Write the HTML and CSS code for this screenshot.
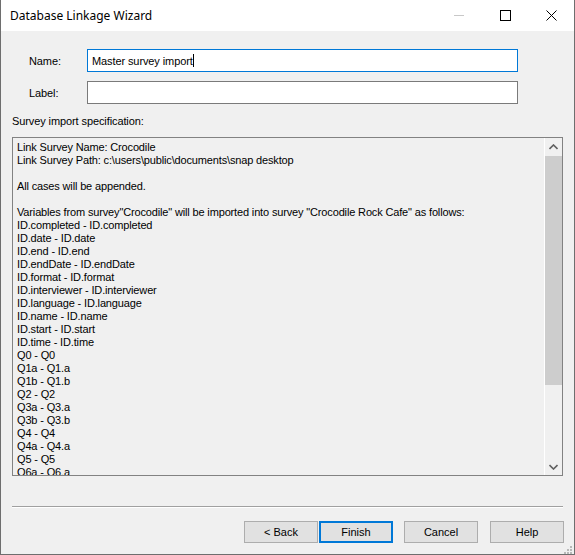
FILE: index.html
```html
<!DOCTYPE html>
<html lang="en">
<head>
    <meta charset="UTF-8">
    <title>Database Linkage Wizard</title>
    <link rel="stylesheet" href="styles.css">
</head>
<body>
    <div class="window">
        <div class="titlebar">
            <span class="title">Database Linkage Wizard</span>
            <div class="controls">
                <span class="ctl min"><svg width="11" height="11"><line x1="0" y1="5.5" x2="10" y2="5.5" stroke="#c8c8c8" stroke-width="1"/></svg></span>
                <span class="ctl max"><svg width="11" height="11"><rect x="0.5" y="0.5" width="10" height="10" fill="none" stroke="#000" stroke-width="1"/></svg></span>
                <span class="ctl close"><svg width="11" height="11"><path d="M0.5 0.5 L10.5 10.5 M10.5 0.5 L0.5 10.5" stroke="#000" stroke-width="1"/></svg></span>
            </div>
        </div>

        <div class="content">
            <div class="field">
                <label>Name:</label>
                <div class="input focus">Master survey import<span class="caret"></span></div>
            </div>
            <div class="field">
                <label>Label:</label>
                <div class="input"></div>
            </div>

            <div class="spec-label">Survey import specification:</div>
            <div class="spec">
                <div class="spec-text">
                    <div>Link Survey Name: Crocodile</div>
                    <div>Link Survey Path: c:\users\public\documents\snap desktop</div>
                    <div>&nbsp;</div>
                    <div>All cases will be appended.</div>
                    <div>&nbsp;</div>
                    <div>Variables from survey"Crocodile" will be imported into survey "Crocodile Rock Cafe" as follows:</div>
                    <div>ID.completed - ID.completed</div>
                    <div>ID.date - ID.date</div>
                    <div>ID.end - ID.end</div>
                    <div>ID.endDate - ID.endDate</div>
                    <div>ID.format - ID.format</div>
                    <div>ID.interviewer - ID.interviewer</div>
                    <div>ID.language - ID.language</div>
                    <div>ID.name - ID.name</div>
                    <div>ID.start - ID.start</div>
                    <div>ID.time - ID.time</div>
                    <div>Q0 - Q0</div>
                    <div>Q1a - Q1.a</div>
                    <div>Q1b - Q1.b</div>
                    <div>Q2 - Q2</div>
                    <div>Q3a - Q3.a</div>
                    <div>Q3b - Q3.b</div>
                    <div>Q4 - Q4</div>
                    <div>Q4a - Q4.a</div>
                    <div>Q5 - Q5</div>
                    <div>Q6a - Q6.a</div>
                </div>
                <div class="scrollbar">
                    <div class="arrow"><svg width="9" height="6"><path d="M0.5 5 L4.5 1 L8.5 5" fill="none" stroke="#606060" stroke-width="1.6"/></svg></div>
                    <div class="track"><div class="thumb"></div></div>
                    <div class="arrow"><svg width="9" height="6"><path d="M0.5 1 L4.5 5 L8.5 1" fill="none" stroke="#606060" stroke-width="1.6"/></svg></div>
                </div>
            </div>

            <div class="separator"></div>

            <div class="buttons">
                <button>&lt; Back</button>
                <button class="default">Finish</button>
                <button class="cancel">Cancel</button>
                <button class="help">Help</button>
            </div>
        </div>
        <div class="grip">
            <svg width="8" height="8">
                <rect x="6" y="0" width="2" height="2" fill="#b8b8b8"/>
                <rect x="3" y="3" width="2" height="2" fill="#b8b8b8"/>
                <rect x="6" y="3" width="2" height="2" fill="#b8b8b8"/>
                <rect x="0" y="6" width="2" height="2" fill="#b8b8b8"/>
                <rect x="3" y="6" width="2" height="2" fill="#b8b8b8"/>
                <rect x="6" y="6" width="2" height="2" fill="#b8b8b8"/>
            </svg>
        </div>
    </div>
</body>
</html>
```

FILE: styles.css
```css
body { margin: 0; font-family: "Liberation Sans", Arial, sans-serif; font-size: 11px; color: #000; }
.window { position: relative; width: 573px; height: 554px; background: #f0f0f0; border: 1px solid #6e6e6e; border-top: none; overflow: hidden; }
.titlebar { height: 31px; background: #fff; display: flex; align-items: center; justify-content: space-between; }
.title { font-family: "Noto Sans", sans-serif; font-size: 12px; padding-left: 9px; padding-bottom: 1px; }
.controls { display: flex; height: 31px; }
.ctl { width: 46px; display: flex; align-items: center; justify-content: center; padding-bottom: 1px; }
.content { padding: 18px 11px 0 11px; }
.field { display: flex; align-items: center; margin-bottom: 9px; }
.field label { width: 58px; padding-left: 17px; letter-spacing: -0.1px; }
.input { width: 425px; height: 21px; background: #fff; border: 1px solid #7a7a7a; display: flex; align-items: center; padding-left: 4px; box-sizing: content-box; letter-spacing: -0.1px; }
.input.focus { border-color: #0078d7; }
.caret { display: inline-block; width: 1px; height: 13px; background: #000; }
.spec-label { margin-top: 11px; height: 14px; letter-spacing: -0.1px; }
.spec { margin-top: 8px; width: 549px; height: 337px; border: 1px solid #828282; display: flex; }
.spec-text { flex: 1; padding: 3px 0 0 4px; line-height: 13px; overflow: hidden; white-space: nowrap; letter-spacing: -0.15px; }
.scrollbar { width: 17px; border-left: 1px solid #fff; display: flex; flex-direction: column; }
.arrow { height: 17px; display: flex; align-items: center; justify-content: center; }
.track { flex: 1; }
.thumb { margin-top: 1px; height: 229px; background: #cdcdcd; }
.separator { margin-top: 30px; width: 551px; border-top: 1px solid #a0a0a0; border-bottom: 1px solid #fff; }
.buttons { display: flex; justify-content: flex-end; margin-top: 13px; width: 552px; }
.buttons button { width: 74px; height: 22px; margin-left: 1px; background: #e1e1e1; border: 1px solid #adadad; font-family: "Liberation Sans", Arial, sans-serif; font-size: 11px; padding: 0; color: #000; }
.buttons button.default { border: 2px solid #0078d7; }
.buttons button.cancel { margin-left: 11px; }
.buttons button.help { margin-left: 12px; }
.grip { position: absolute; right: 2px; bottom: 2px; width: 8px; height: 8px; }
```
